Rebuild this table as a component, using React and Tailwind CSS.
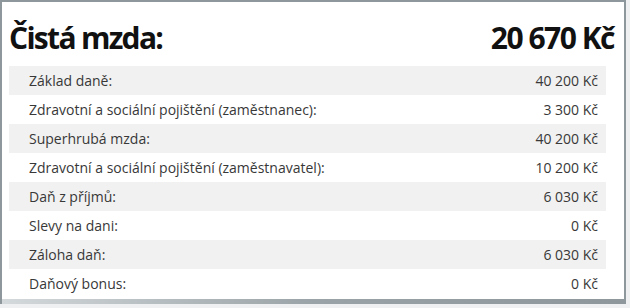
const radky = [
  ['Základ daně:', '40 200 Kč'],
  ['Zdravotní a sociální pojištění (zaměstnanec):', '3 300 Kč'],
  ['Superhrubá mzda:', '40 200 Kč'],
  ['Zdravotní a sociální pojištění (zaměstnavatel):', '10 200 Kč'],
  ['Daň z příjmů:', '6 030 Kč'],
  ['Slevy na dani:', '0 Kč'],
  ['Záloha daň:', '6 030 Kč'],
  ['Daňový bonus:', '0 Kč'],
];

export default function App() {
  return (
    <div className="w-[630px] h-[308px] bg-[#eef0f1] overflow-hidden font-['Open_Sans',sans-serif]">
      <div className="w-[626px] h-[304px] bg-white border-2 border-b-0 border-[#8d979c] flex flex-col">
        {/* hlavička */}
        <div className="flex justify-between items-end h-[64px] pl-[7px] pr-[10px] pb-[13px]">
          <h1 className="text-[30px] leading-none font-bold tracking-[-1.7px] text-[#111]">Čistá mzda:</h1>
          <span className="text-[30px] leading-none font-bold tracking-[-1.5px] text-[#111]">20 670 Kč</span>
        </div>

        {/* tabulka */}
        <div className="mx-[7px] w-[597px] flex flex-col">
          {radky.map(([popis, castka], i) => (
            <div
              key={popis}
              className={`h-[29px] flex justify-between items-center pl-[20px] pr-[8px] text-[14px] text-[#383838] ${
                i % 2 === 0 ? 'bg-[#f1f1f1]' : 'bg-white'
              }`}
            >
              <span>{popis}</span>
              <span>{castka}</span>
            </div>
          ))}
        </div>

        <div className="mt-auto h-[5px] bg-gradient-to-r from-[#d4d9db] via-[#9aa3a7] to-[#8d979c]" />
      </div>
    </div>
  );
}
